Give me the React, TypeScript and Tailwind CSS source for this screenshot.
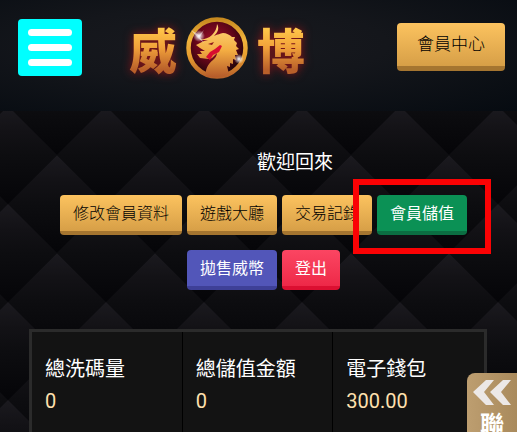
import type { ReactNode } from "react";

type Tone = "gold" | "green" | "indigo" | "red";

const tones: Record<Tone, string> = {
  gold: "border-[#a57530] bg-linear-to-b from-[#fcc35f] to-[#d79f47] font-light text-black",
  green: "border-[#0b6e42] bg-[#0b9155] text-white",
  indigo: "border-[#3e4098] bg-[#5256b9] text-white",
  red: "border-[#dc0f31] bg-linear-to-b from-[#fb4562] to-[#ee2848] text-white",
};

const stats = [
  { label: "總洗碼量", value: "0" },
  { label: "總儲值金額", value: "0" },
  { label: "電子錢包", value: "300.00" },
];

function ActionButton({ tone, children }: { tone: Tone; children: ReactNode }) {
  return (
    <button
      type="button"
      className={`h-10 rounded border-b-4 px-[13px] pb-0.5 text-base leading-8 whitespace-nowrap ${tones[tone]}`}
    >
      {children}
    </button>
  );
}

// Quilted diamond texture behind the page content
function DiamondBackdrop() {
  return (
    <svg className="absolute inset-0 h-full w-full" aria-hidden="true">
      <defs>
        <linearGradient id="facet" x1="0.5" y1="0" x2="0.5" y2="1">
          <stop offset="0" stopColor="#1b1a1f" />
          <stop offset="0.25" stopColor="#131216" />
          <stop offset="0.5" stopColor="#0d0d10" />
          <stop offset="1" stopColor="#050508" />
        </linearGradient>
        <pattern id="quilt" x="8" y="57" width="98" height="98" patternUnits="userSpaceOnUse">
          <rect width="98" height="98" fill="#09090d" />
          <path d="M49 0 98 49 49 98 0 49Z" fill="url(#facet)" />
          <path d="M0 -49 49 0 0 49 -49 0Z" fill="url(#facet)" />
          <path d="M98 -49 147 0 98 49 49 0Z" fill="url(#facet)" />
          <path d="M0 49 49 98 0 147 -49 98Z" fill="url(#facet)" />
          <path d="M98 49 147 98 98 147 49 98Z" fill="url(#facet)" />
        </pattern>
      </defs>
      <rect width="100%" height="100%" fill="url(#quilt)" />
    </svg>
  );
}

function DragonEmblem() {
  return (
    <svg viewBox="0 0 64 64" className="h-16 w-16" aria-hidden="true">
      <defs>
        <linearGradient id="ring" x1="0" y1="0" x2="0" y2="1">
          <stop offset="0" stopColor="#c88a1f" />
          <stop offset="0.35" stopColor="#f0b43c" />
          <stop offset="0.65" stopColor="#e79d2f" />
          <stop offset="1" stopColor="#b8622a" />
        </linearGradient>
        <radialGradient id="core" cx="0.45" cy="0.4" r="0.6">
          <stop offset="0" stopColor="#a30d2a" />
          <stop offset="0.6" stopColor="#5e0618" />
          <stop offset="1" stopColor="#1a0508" />
        </radialGradient>
        <linearGradient id="dragon" x1="0" y1="0" x2="0" y2="1">
          <stop offset="0" stopColor="#ffd778" />
          <stop offset="0.5" stopColor="#f3ac42" />
          <stop offset="1" stopColor="#b55a2a" />
        </linearGradient>
        <radialGradient id="spark">
          <stop offset="0" stopColor="#fff" />
          <stop offset="0.3" stopColor="#fff" stopOpacity="0.7" />
          <stop offset="1" stopColor="#fff" stopOpacity="0" />
        </radialGradient>
      </defs>
      <circle cx="32" cy="32" r="28.5" fill="url(#core)" stroke="url(#ring)" strokeWidth="4.5" />
      <path
        fill="url(#dragon)"
        d="M21 60C20 53 23 48 28 44C30 42 32 40 32 37L27 42C24 44 19 42 15 42L12 38L17 38L15 35L20 35L15 32L11 29C14 28 16 26 19 25L23 24L14 24C20 23 24 22 27 19C30 16 32 12 32 8C35 13 32 17 29 20C33 18 35 18 38 17C41 17 45 19 47 21L50 21L49 24L52 27L51 30L54 33L51 34L53 39L50 39L51 44L48 43L48 48L45 47L45 51L42 50L44 58C37 62 27 62 21 60Z"
      />
      <path d="M21 41 25 36 30 33 35 29 37 30 34 36 28 39 25 44Z" fill="#d80e30" />
      <path d="M23 28 29 26 27 29Z" fill="#8f151b" />
      <circle cx="14" cy="20" r="6" fill="url(#spark)" />
      <circle cx="54" cy="43" r="5" fill="url(#spark)" />
      <path d="M6 14 14 19 19 14 15 21 19 27 13 22Z" fill="#fff" opacity="0.5" />
    </svg>
  );
}

function LogoGlyph({ children }: { children: string }) {
  return (
    <span className="bg-linear-to-b from-[#ffc548] from-20% via-[#f0a03a] to-[#b9602a] to-85% bg-clip-text text-5xl leading-[62px] font-black text-transparent drop-shadow-[0_0_5px_#8c1418]">
      {children}
    </span>
  );
}

function Header() {
  return (
    <header className="relative flex h-[111px] items-start bg-[radial-gradient(ellipse_at_42%_40%,#191a1f_0%,#14161b_40%,#060b11_100%)] pr-3 pl-[18px]">
      <button
        type="button"
        aria-label="選單"
        className="mt-[19px] flex h-[57px] w-16 flex-col items-center justify-center gap-2 rounded bg-[#00ffff]"
      >
        <span className="h-[7px] w-11 rounded-full bg-white" />
        <span className="h-[7px] w-11 rounded-full bg-white" />
        <span className="h-[7px] w-11 rounded-full bg-white" />
      </button>
      <a href="#" className="mt-4 ml-[47px] flex items-center gap-2">
        <LogoGlyph>威</LogoGlyph>
        <DragonEmblem />
        <LogoGlyph>博</LogoGlyph>
      </a>
      <button
        type="button"
        className="mt-[23px] ml-auto h-12 rounded border-b-5 border-[#a57530] bg-linear-to-b from-[#fcc35f] to-[#d79f47] px-5 pb-1 text-[17px] font-light whitespace-nowrap text-black"
      >
        會員中心
      </button>
    </header>
  );
}

function StatsTable() {
  return (
    <table className="h-40 w-full table-fixed border-separate border-spacing-0 border-3 border-[#2b2b2b] bg-[#131313] text-left text-xl">
      <thead>
        <tr>
          {stats.map((s) => (
            <th
              key={s.label}
              scope="col"
              className="h-[51px] border-r border-black pt-5 pl-[13px] leading-7 font-normal text-white last:border-r-0"
            >
              {s.label}
            </th>
          ))}
        </tr>
      </thead>
      <tbody>
        <tr>
          {stats.map((s) => (
            <td
              key={s.label}
              className="border-r border-black pt-1 pl-[13px] align-top font-[Roboto,sans-serif] leading-7 text-[#ffe0ae] last:border-r-0"
            >
              {s.value}
            </td>
          ))}
        </tr>
      </tbody>
    </table>
  );
}

export default function App() {
  return (
    <div className="relative h-screen overflow-hidden bg-[#09090d] font-['Noto_Sans_CJK_TC',sans-serif]">
      <DiamondBackdrop />
      <Header />

      <main className="relative pr-[30px] pl-[29px]">
        <p className="pt-9 pl-[74px] text-center text-[19px] leading-7 text-white">歡迎回來</p>

        <div className="mt-5 flex flex-wrap justify-center gap-x-[5px] gap-y-[15px] pl-[11px]">
          <ActionButton tone="gold">修改會員資料</ActionButton>
          <ActionButton tone="gold">遊戲大廳</ActionButton>
          <ActionButton tone="gold">交易記錄</ActionButton>
          <div className="relative">
            <ActionButton tone="green">會員儲值</ActionButton>
            {/* Highlight around the deposit button */}
            <div className="pointer-events-none absolute -inset-x-6 -top-4 -bottom-[19px] border-6 border-[#fb0204]" />
          </div>
          <ActionButton tone="indigo">拋售威幣</ActionButton>
          <ActionButton tone="red">登出</ActionButton>
        </div>

        <section className="mt-[39px]">
          <StatsTable />
        </section>
      </main>

      {/* Contact drawer tab */}
      <button
        type="button"
        className="absolute top-[373px] right-0 flex h-40 w-[50px] flex-col items-center rounded-tl-lg bg-linear-to-r from-[#bd9e70] to-[#a98a5c] pt-1.5 text-white"
      >
        <svg viewBox="0 0 40 28" className="h-7 w-10" aria-hidden="true">
          <path d="M14 1H22L12 13 22 26H14L1 13Z" fill="#ece8e6" />
          <path d="M31 1H39L29 13 39 26H31L18 13Z" fill="#ece8e6" />
        </svg>
        <span className="text-2xl leading-8 font-bold">聯</span>
      </button>
    </div>
  );
}
